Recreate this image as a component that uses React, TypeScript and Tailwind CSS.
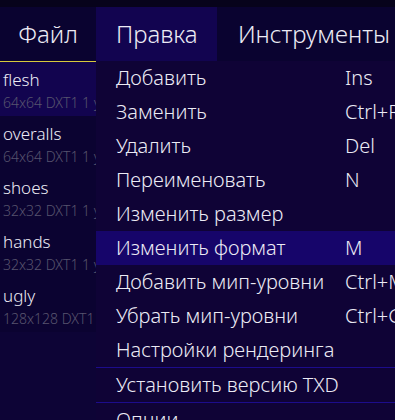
const textures = [
    { name: "flesh", info: "64x64 DXT1 1 уровень" },
    { name: "overalls", info: "64x64 DXT1 1 уровень" },
    { name: "shoes", info: "32x32 DXT1 1 уровень" },
    { name: "hands", info: "32x32 DXT1 1 уровень" },
    { name: "ugly", info: "128x128 DXT1 1 уровень" },
];

const editItems = [
    { label: "Добавить", key: "Ins" },
    { label: "Заменить", key: "Ctrl+R" },
    { label: "Удалить", key: "Del" },
    { label: "Переименовать", key: "N" },
    { label: "Изменить размер", key: "" },
    { label: "Изменить формат", key: "M", active: true },
    { label: "Добавить мип-уровни", key: "Ctrl+M" },
    { label: "Убрать мип-уровни", key: "Ctrl+G" },
    { label: "Настройки рендеринга", key: "" },
];

export default function App() {
    return (
        <div
            className="relative w-[395px] h-[420px] overflow-hidden bg-[#0d0436] text-[#ecebf5] font-light"
            style={{ fontFamily: '"Noto Sans", "Open Sans", sans-serif' }}
        >
            <div className="h-[7px] bg-[#07031b]"></div>

            {/* menu bar */}
            <div className="flex h-[54px] bg-[#0a0330] text-[24px]">
                <div className="w-[96px] flex items-center justify-center">Файл</div>
                <div className="w-[121px] flex items-center pl-[20px] bg-[#120450]">Правка</div>
                <div className="flex items-center pl-[21px] whitespace-nowrap">Инструменты</div>
            </div>

            {/* texture list */}
            <div className="border-t border-[#d8c93c] w-[96px]"></div>
            <div className="w-[300px]">
                {textures.map((tex, i) => (
                    <div
                        key={tex.name}
                        className={`h-[54px] flex flex-col justify-center pl-[3px] pt-[3px] ${i === 0 ? "bg-[#12044f]" : "bg-[#0b0331]"}`}
                    >
                        <div className="text-[17px] leading-[24px]">{tex.name}</div>
                        <div className="text-[14px] leading-[21px] text-[#58546e] whitespace-nowrap">{tex.info}</div>
                    </div>
                ))}
            </div>

            {/* edit dropdown */}
            <div className="absolute left-[96px] top-[61px] w-[320px] bg-[#0f0336] text-[20px]">
                {editItems.map((item) => (
                    <div
                        key={item.label}
                        className={`h-[34px] flex items-center pl-[20px] ${item.active ? "bg-[#16056a]" : ""}`}
                    >
                        <span className="w-[229px] whitespace-nowrap">{item.label}</span>
                        <span className="whitespace-nowrap">{item.key}</span>
                    </div>
                ))}
                <div className="h-px bg-[#1c0c8c]"></div>
                <div className="h-[34px] flex items-center pl-[20px] whitespace-nowrap">Установить версию TXD</div>
                <div className="h-px bg-[#1c0c8c]"></div>
                <div className="h-[34px] flex items-center pl-[20px]">Опции</div>
            </div>
        </div>
    );
}
